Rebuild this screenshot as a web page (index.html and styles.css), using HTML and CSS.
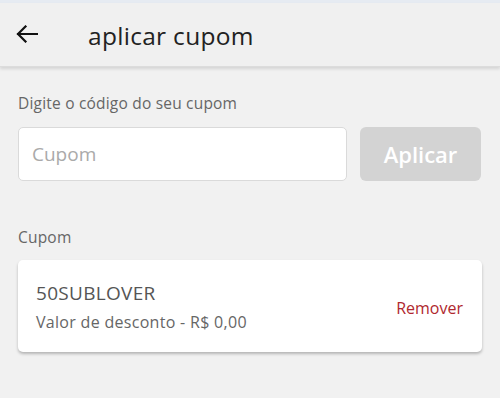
FILE: index.html
```html
<!DOCTYPE html>
<html lang="pt">
<head>
<meta charset="utf-8">
<link rel="stylesheet" href="styles.css">
</head>
<body>
<div class="topline"></div>
<header class="appbar">
  <svg class="back" width="22" height="18" viewBox="0 0 22 18"><path d="M21 9H2M9.5 1.5L2 9l7.5 7.5" fill="none" stroke="#111" stroke-width="2.2" stroke-linecap="square"/></svg>
  <h1 class="title">aplicar cupom</h1>
</header>
<main class="content">
  <p class="label">Digite o código do seu cupom</p>
  <div class="form-row">
    <input class="input" type="text" placeholder="Cupom">
    <button class="btn">Aplicar</button>
  </div>
  <p class="label section">Cupom</p>
  <div class="card">
    <div class="card-info">
      <div class="code">50SUBLOVER</div>
      <div class="desc">Valor de desconto - R$ 0,00</div>
    </div>
    <span class="remove">Remover</span>
  </div>
</main>
</body>
</html>
```
FILE: styles.css
```css
* { box-sizing: border-box; }
html, body { margin: 0; padding: 0; }
body {
  background: #f1f1f1;
  font-family: "Open Sans", "Noto Sans", sans-serif;
  width: 500px;
  height: 398px;
  overflow: hidden;
}
.topline { height: 3px; background: #e6ebf2; }
.appbar {
  height: 64px;
  display: flex;
  align-items: center;
  background: #f0f0f0;
  box-shadow: 0 2px 3px rgba(0,0,0,0.12);
  border-bottom: 1px solid #dcdcdc;
  position: relative;
}
.back { margin-left: 16px; margin-top: -2px; }
.title {
  margin: 2px 0 0 50px;
  font-weight: 400;
  font-size: 24.5px;
  color: #222;
  letter-spacing: 0.3px;
}
.content { padding: 26px 18px 0 18px; }
.label {
  margin: 0;
  font-size: 15.5px;
  color: #666;
  line-height: 20px;
  letter-spacing: 0.2px;
}
.form-row {
  display: flex;
  gap: 13px;
  margin-top: 14px;
}
.input {
  width: 329px;
  height: 54px;
  border: 1px solid #dadada;
  border-radius: 5px;
  background: #fff;
  padding: 0 13px;
  font-family: inherit;
  font-size: 19px;
  color: #333;
  outline: none;
}
.input::placeholder { color: #aaa; }
.btn {
  width: 121px;
  height: 54px;
  border: none;
  border-radius: 6px;
  background: #d3d3d3;
  color: #fff;
  font-family: inherit;
  font-size: 22px;
  font-weight: 600;
  padding: 0;
}
.section { margin-top: 46px; }
.card {
  margin-top: 13px;
  width: 464px;
  height: 92px;
  background: #fff;
  border-radius: 5px;
  box-shadow: 0 2px 3px rgba(0,0,0,0.25);
  display: flex;
  align-items: center;
  justify-content: space-between;
  padding: 0 19px 0 18px;
}
.card-info { display: flex; flex-direction: column; gap: 6px; margin-top: 2px; }
.code { font-size: 19px; font-weight: 500; color: #555; line-height: 24px; letter-spacing: 0.3px; }
.desc { font-size: 16px; color: #666; line-height: 22px; letter-spacing: 0.3px; }
.remove { font-size: 16px; color: #b0282e; margin-top: 3px; }
```
